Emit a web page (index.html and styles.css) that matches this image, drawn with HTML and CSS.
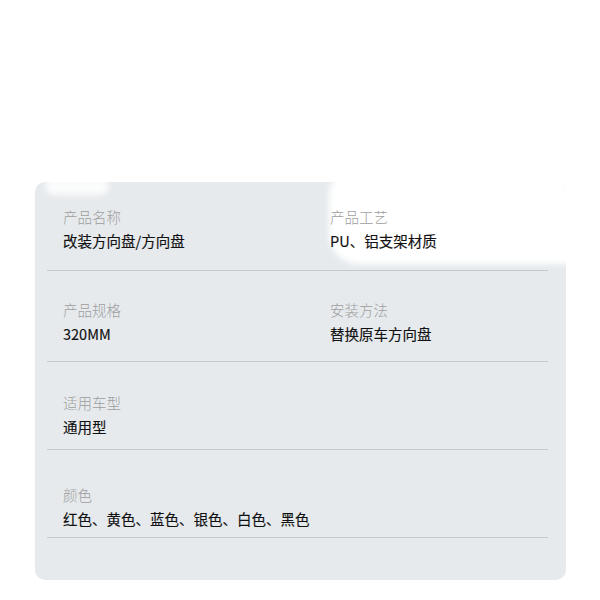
FILE: index.html
```html
<!DOCTYPE html>
<html lang="zh-CN">
<head>
  <meta charset="UTF-8" />
  <title>产品参数</title>
  <meta name="viewport" content="width=device-width, initial-scale=1.0" />
  <link rel="stylesheet" href="styles.css">
</head>
<body>
  <div class="spec-card">
    <div class="smudge smudge-top"></div>
    <div class="smudge smudge-corner"></div>

    <div class="spec-row">
      <div class="spec-item">
        <div class="spec-label">产品名称</div>
        <div class="spec-value">改装方向盘/方向盘</div>
      </div>
      <div class="spec-item">
        <div class="spec-label">产品工艺</div>
        <div class="spec-value">PU、铝支架材质</div>
      </div>
    </div>

    <div class="spec-row">
      <div class="spec-item">
        <div class="spec-label">产品规格</div>
        <div class="spec-value">320MM</div>
      </div>
      <div class="spec-item">
        <div class="spec-label">安装方法</div>
        <div class="spec-value">替换原车方向盘</div>
      </div>
    </div>

    <div class="spec-row">
      <div class="spec-item">
        <div class="spec-label">适用车型</div>
        <div class="spec-value">通用型</div>
      </div>
    </div>

    <div class="spec-row">
      <div class="spec-item">
        <div class="spec-label">颜色</div>
        <div class="spec-value">红色、黄色、蓝色、银色、白色、黑色</div>
      </div>
    </div>
  </div>
</body>
</html>
```

FILE: styles.css
```css
* {
  box-sizing: border-box;
}

body {
  margin: 0;
  padding: 182px 34px 20px 35px;
  background-color: #fff;
  font-family: "Noto Sans CJK SC", "Noto Sans", sans-serif;
  color: #111;
}

.spec-card {
  position: relative;
  overflow: hidden;
  height: 398px;
  padding: 0 18px 0 12px;
  background-color: #e6eaed;
  border-radius: 10px;
}

/* white patches left over from the original picture */
.smudge {
  position: absolute;
  background-color: #fff;
  filter: blur(3px);
}

.smudge-top {
  left: 10px;
  top: -4px;
  width: 64px;
  height: 17px;
  border-radius: 9px;
  opacity: 0.85;
}

.smudge-corner {
  left: 294px;
  top: -12px;
  width: 260px;
  height: 94px;
  border-radius: 24px 0 0 30px;
}

.spec-row {
  position: relative;
  z-index: 1;
  display: grid;
  grid-template-columns: 267px 1fr;
  padding: 25px 0 19px 16px;
  border-bottom: 1px solid #c6cacd;
}

.spec-row:nth-child(4) {
  padding-top: 29px;
  padding-bottom: 17px;
}

.spec-row:nth-child(5) {
  padding-top: 31px;
  padding-bottom: 12px;
}

.spec-row:nth-child(6) {
  padding-top: 35px;
  padding-bottom: 8px;
}

.spec-label {
  font-size: 14.5px;
  line-height: 20px;
  font-weight: 300;
  color: #9e9e9e;
}

.spec-value {
  margin-top: 4px;
  font-size: 14.5px;
  line-height: 20px;
  font-weight: 400;
  color: #111;
  -webkit-text-stroke: 0.15px #111;
}
```
